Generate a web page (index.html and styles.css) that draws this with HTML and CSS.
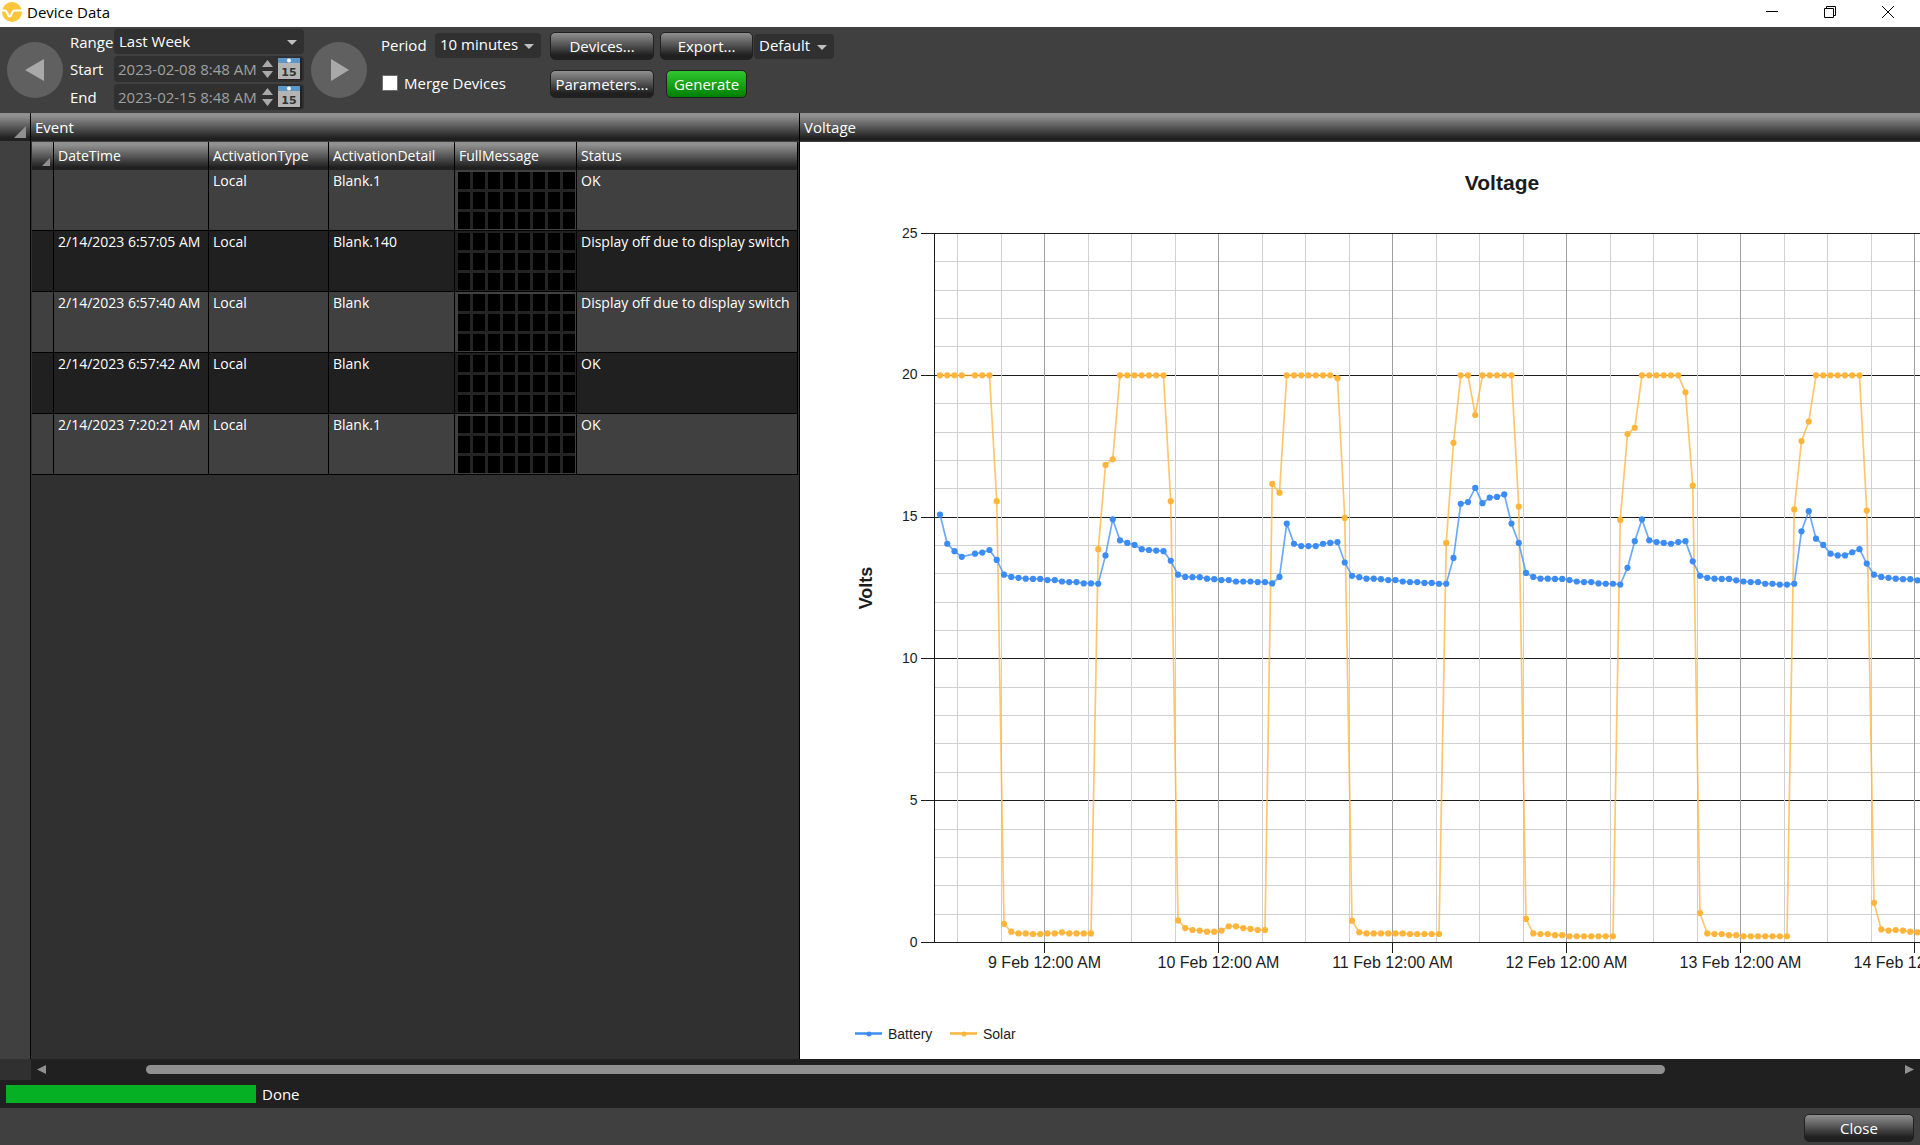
FILE: index.html
```html
<!DOCTYPE html>
<html lang="en">
<head>
  <meta charset="utf-8">
  <title>Device Data</title>
  <link rel="stylesheet" href="styles.css">
</head>
<body>

<header class="titlebar">
  <svg class="logo" viewBox="0 0 20 20" width="20" height="20">
    <circle cx="10" cy="10" r="10" fill="#fdc53a"/>
    <path d="M0 8.500 L3 8.500 C5.500 8.500 5.500 14.500 7.500 14.500 C10 14.500 9.500 8.500 12.500 8.500 L20 8.500" fill="none" stroke="#fff" stroke-width="2.2"/>
  </svg>
  <h1>Device Data</h1>
  <div class="window-buttons">
    <button aria-label="Minimize"><svg width="14" height="14" viewBox="0 0 14 14"><path d="M1 6.5H13"/></svg></button>
    <button aria-label="Restore"><svg width="14" height="14" viewBox="0 0 14 14"><path d="M1.5 3.5H10.5V12.5H1.5ZM3.5 3.5V1.5H12.5V10.5H10.5"/></svg></button>
    <button aria-label="Close window"><svg width="14" height="14" viewBox="0 0 14 14"><path d="M1 1L13 13M13 1L1 13"/></svg></button>
  </div>
</header>

<section class="toolbar">
  <button class="round" aria-label="Previous"><svg width="56" height="56"><path d="M37 17V39L18 28Z"/></svg></button>

  <div class="range">
    <label for="range">Range</label>
    <div class="select"><select id="range"><option>Last Week</option></select></div>

    <label for="start">Start</label>
    <div class="date">
      <input type="text" id="start" value="2023-02-08 8:48 AM">
      <svg class="spin" width="11" height="20"><path d="M0 8L5.500 1L11 8ZM0 12L5.500 19L11 12Z"/></svg>
      <svg class="calendar" width="24" height="22"><rect width="24" height="22" fill="#222"/><rect width="22" height="5" fill="#5b97c9"/><rect y="5" width="22" height="16" fill="#b4b4b4"/><circle cx="11" cy="2.500" r="2" fill="#fff"/><text x="11" y="18">15</text></svg>
    </div>

    <label for="end">End</label>
    <div class="date">
      <input type="text" id="end" value="2023-02-15 8:48 AM">
      <svg class="spin" width="11" height="20"><path d="M0 8L5.500 1L11 8ZM0 12L5.500 19L11 12Z"/></svg>
      <svg class="calendar" width="24" height="22"><rect width="24" height="22" fill="#222"/><rect width="22" height="5" fill="#5b97c9"/><rect y="5" width="22" height="16" fill="#b4b4b4"/><circle cx="11" cy="2.500" r="2" fill="#fff"/><text x="11" y="18">15</text></svg>
    </div>
  </div>

  <button class="round" aria-label="Next"><svg width="56" height="56"><path d="M20 17V39L38 28Z"/></svg></button>

  <div class="options">
    <div class="period">
      <label for="period">Period</label>
      <div class="select"><select id="period"><option>10 minutes</option></select></div>
    </div>
    <button class="btn wide">Devices...</button>
    <div class="export">
      <button class="btn">Export...</button>
      <div class="select"><select aria-label="Export format"><option>Default</option></select></div>
    </div>
    <div class="merge">
      <input type="checkbox" id="merge">
      <label for="merge">Merge Devices</label>
    </div>
    <button class="btn wide">Parameters...</button>
    <button class="btn generate">Generate</button>
  </div>
</section>

<main class="panes">
  <div class="gutter"><div class="bar"><svg width="12" height="12"><path d="M12 0V12H0Z"/></svg></div></div>

  <section class="event">
    <h2 class="bar">Event</h2>
    <table>
      <colgroup><col class="c-mark"><col class="c-date"><col class="c-type"><col class="c-detail"><col class="c-message"><col class="c-status"></colgroup>
      <thead>
        <tr><th class="mark"><svg width="8" height="8"><path d="M8 0V8H0Z"/></svg></th><th>DateTime</th><th>ActivationType</th><th>ActivationDetail</th><th>FullMessage</th><th>Status</th></tr>
      </thead>
      <tbody>
        <tr><td></td><td></td><td>Local</td><td>Blank.1</td><td><div class="matrix"></div></td><td>OK</td></tr>
        <tr><td></td><td>2/14/2023 6:57:05 AM</td><td>Local</td><td>Blank.140</td><td><div class="matrix"></div></td><td>Display off due to display switch</td></tr>
        <tr><td></td><td>2/14/2023 6:57:40 AM</td><td>Local</td><td>Blank</td><td><div class="matrix"></div></td><td>Display off due to display switch</td></tr>
        <tr><td></td><td>2/14/2023 6:57:42 AM</td><td>Local</td><td>Blank</td><td><div class="matrix"></div></td><td>OK</td></tr>
        <tr><td></td><td>2/14/2023 7:20:21 AM</td><td>Local</td><td>Blank.1</td><td><div class="matrix"></div></td><td>OK</td></tr>
      </tbody>
    </table>
  </section>

  <section class="voltage">
    <h2 class="bar">Voltage</h2>
    <div class="chart"><svg id="chart" width="1402" height="917"></svg></div>
  </section>
</main>

<div class="scroll">
  <div class="scroll-corner"></div>
  <button aria-label="Scroll left"><svg width="9" height="9"><path d="M9 0V9L0 4.500Z"/></svg></button>
  <div class="track"><div class="thumb"></div></div>
  <button aria-label="Scroll right"><svg width="9" height="9"><path d="M0 0V9L9 4.500Z"/></svg></button>
</div>

<div class="status">
  <div class="progress"></div>
  <span>Done</span>
</div>

<footer>
  <button class="btn close">Close</button>
</footer>

<script src="chart.js"></script>
</body>
</html>
```

FILE: styles.css
```css
* {
  box-sizing: border-box;
}

body {
  margin: 0;
  min-height: 100vh;
  display: flex;
  flex-direction: column;
  font-family: "Open Sans", "Noto Sans", sans-serif;
  font-size: 15px;
  line-height: 22px;
  color: white;
  background-color: #404040;
  overflow: hidden;
}

button, input, select {
  font: inherit;
  color: inherit;
  margin: 0;
}

button {
  padding: 0;
  border: none;
  background: none;
}

svg {
  display: block;
}

h1, h2 {
  margin: 0;
  font-size: 15px;
  font-weight: 400;
}

/* title bar */

.titlebar {
  display: flex;
  align-items: center;
  height: 27px;
  padding: 0 25px 3px 2px;
  background-color: white;
  color: black;
}

.titlebar h1 {
  margin-left: 5px;
}

.window-buttons {
  display: flex;
  gap: 44px;
  margin-left: auto;
}

.window-buttons path {
  fill: none;
  stroke: black;
}

/* toolbar */

.toolbar {
  display: flex;
  align-items: center;
  height: 86px;
  padding: 2px 7px 3px;
}

.round {
  border-radius: 50%;
  background-color: #606060;
}

.round path, .spin path {
  fill: #a9a9a9;
}

.range {
  display: grid;
  grid-template-columns: 44px 190px;
  grid-template-rows: 25px 26px 26px;
  row-gap: 2px;
  align-items: center;
  margin: 0 7px;
}

.select, .date {
  position: relative;
  height: 100%;
  border-radius: 4px;
  background-color: #303030;
}

.select::after {
  content: "";
  position: absolute;
  right: 7px;
  top: 11px;
  border: 5px solid transparent;
  border-top-color: #c0c0c0;
  border-bottom: 0;
  pointer-events: none;
}

.select select {
  appearance: none;
  width: 100%;
  height: 100%;
  padding: 0 5px 2px;
  border: none;
  background: none;
}

.date {
  display: flex;
  align-items: center;
  padding-right: 2px;
}

.date input {
  flex: 1;
  min-width: 0;
  padding: 0 0 0 4px;
  border: none;
  background: none;
  color: #a0a0a0;
}

.calendar {
  margin-left: 5px;
}

.calendar text {
  font: bold 11px "DejaVu Sans", sans-serif;
  text-anchor: middle;
  fill: #333;
}

.options {
  display: grid;
  grid-template-columns: 169px 110px auto;
  grid-template-rows: 28px 28px;
  row-gap: 10px;
  margin-left: 14px;
  padding-bottom: 9px;
}

.period, .export, .merge {
  display: flex;
  align-items: center;
}

.period .select {
  width: 106px;
  height: 25px;
  margin-left: auto;
  margin-right: 9px;
}

.export .select {
  width: 80px;
  height: 25px;
  margin-left: 1px;
}

.export .btn {
  width: 93px;
}

.period, .merge {
  padding-bottom: 2px;
}

.merge input {
  appearance: none;
  width: 16px;
  height: 16px;
  margin: 0 6px 0 1px;
  border: 1px solid #707070;
  background-color: white;
}

.btn {
  height: 28px;
  border: 1px solid #202020;
  border-radius: 5px;
  background-image: linear-gradient(#909090, #202020 85%);
}

.wide {
  width: 104px;
}

.generate {
  width: 81px;
  margin-left: 6px;
  background-image: linear-gradient(#30c830, #008000);
}

/* panes */

.panes {
  flex: 1;
  display: flex;
  min-height: 0;
}

.bar {
  height: 29px;
  padding: 3px 4px;
  border-bottom: 1px solid #404040;
  background-image: linear-gradient(#909090 10%, #202020 90%);
}

.gutter {
  width: 31px;
  border-right: 1px solid black;
}

.gutter .bar {
  display: flex;
  justify-content: flex-end;
  align-items: flex-end;
}

.gutter path, .mark path, .scroll path {
  fill: #909090;
}

.event {
  width: 769px;
  border-right: 1px solid black;
  background-color: #303030;
}

.voltage {
  flex: 1;
  min-width: 0;
  background-color: white;
}

.chart {
  margin-left: 1px;
  overflow: hidden;
}

table {
  width: 766px;
  margin-left: 1px;
  table-layout: fixed;
  border-spacing: 0;
  font-size: 14px;
}

.c-mark { width: 22px; }
.c-date { width: 155px; }
.c-type { width: 120px; }
.c-detail { width: 126px; }
.c-message { width: 122px; }
.c-status { width: 221px; }

th {
  height: 28px;
  padding: 0 4px;
  border-right: 1px solid black;
  background-image: linear-gradient(#909090 10%, #202020 90%);
  font-weight: 400;
  text-align: left;
  white-space: nowrap;
}

th.mark {
  padding: 12px 3px 0 10px;
}

td {
  height: 61px;
  padding: 0 4px;
  border-right: 1px solid black;
  border-bottom: 1px solid black;
  background-color: #404040;
  vertical-align: top;
  white-space: nowrap;
}

tr:nth-child(even) td {
  background-color: #202020;
}

/* 8 x 3 dot matrix sign */
.matrix {
  width: 117px;
  height: 57px;
  margin: 2px 0 0 -1px;
  background:
    repeating-linear-gradient(90deg, transparent 0 12px, #242424 12px 15px),
    repeating-linear-gradient(transparent 0 17px, #242424 17px 20px),
    black;
}

/* chart */

#chart {
  font-family: "Liberation Sans", Arial, sans-serif;
  font-size: 16px;
  fill: #1c1c1c;
}

#chart .grid {
  shape-rendering: crispEdges;
}

#chart .title {
  font-size: 21px;
  font-weight: bold;
}

#chart .axis-title {
  font-size: 18px;
  font-weight: bold;
}

#chart .y-label,
#chart .legend {
  font-size: 14px;
}

/* bottom */

.scroll {
  display: flex;
  align-items: center;
  height: 21px;
  padding-right: 6px;
  background-color: #202020;
}

.scroll-corner {
  width: 31px;
  height: 21px;
  margin-right: 6px;
  background-color: #303030;
}

.track {
  flex: 1;
}

.thumb {
  width: 81.7%;
  height: 9px;
  margin-left: 5.4%;
  border-radius: 5px;
  background-color: #909090;
}

.status {
  display: flex;
  align-items: center;
  height: 28px;
  padding: 0 6px;
  background-color: #202020;
}

.progress {
  width: 250px;
  height: 18px;
  margin-right: 6px;
  background-color: #06b025;
}

footer {
  display: flex;
  justify-content: flex-end;
  height: 37px;
  padding: 6px 6px 3px;
}

.close {
  width: 110px;
}
```

FILE: chart.js
```javascript
const svg = document.getElementById('chart');
const NS = 'http://www.w3.org/2000/svg';

const left = 133.5;
const bottom = 800.5;
const top0 = 91.5;
const width = 1402;
const hour = 7.25;
const volt = (bottom - top0) / 25;
const firstDay = 243.7;
const day = 174;

// hourly readings, one is missing after the first four
const battery = [
  15.09, 14.06, 13.80, 13.60,
  13.71, 13.75, 13.84, 13.49, 12.97, 12.89, 12.86, 12.83, 12.82, 12.82, 12.78, 12.78, 12.73, 12.71, 12.71, 12.66, 12.66,
  12.65, 13.65, 14.92, 14.18, 14.09, 14.02, 13.87, 13.84, 13.82, 13.80, 13.46, 12.97, 12.89, 12.88, 12.88, 12.83, 12.81, 12.78, 12.78, 12.73, 12.73, 12.73, 12.71, 12.71,
  12.66, 12.89, 14.77, 14.06, 13.98, 13.98, 13.98, 14.06, 14.09, 14.12, 13.40, 12.93, 12.88, 12.83, 12.83, 12.81, 12.78, 12.78, 12.73, 12.71, 12.71, 12.68, 12.68, 12.65,
  12.65, 13.56, 15.47, 15.53, 16.03, 15.49, 15.69, 15.71, 15.80, 14.77, 14.09, 13.03, 12.89, 12.83, 12.83, 12.82, 12.82, 12.78, 12.73, 12.71, 12.71, 12.66, 12.65, 12.65,
  12.62, 13.21, 14.15, 14.92, 14.18, 14.12, 14.09, 14.06, 14.12, 14.15, 13.44, 12.93, 12.86, 12.83, 12.82, 12.82, 12.77, 12.73, 12.71, 12.71, 12.65, 12.65, 12.62, 12.62,
  12.65, 14.50, 15.21, 14.24, 14.02, 13.71, 13.65, 13.65, 13.76, 13.87, 13.36, 12.97, 12.89, 12.86, 12.83, 12.81, 12.81, 12.77, 12.75
];

const solar = [
  20, 20, 20, 20,
  20, 20, 20, 15.56, 0.66, 0.38, 0.32, 0.32, 0.30, 0.30, 0.32, 0.32, 0.36, 0.32, 0.32, 0.32, 0.32,
  13.87, 16.84, 17.04, 20, 20, 20, 20, 20, 20, 20, 15.56, 0.78, 0.51, 0.44, 0.42, 0.38, 0.38, 0.42, 0.57, 0.57, 0.51, 0.48, 0.44, 0.44,
  16.17, 15.86, 20, 20, 20, 20, 20, 20, 20, 19.90, 14.97, 0.77, 0.36, 0.32, 0.32, 0.32, 0.32, 0.32, 0.32, 0.30, 0.30, 0.30, 0.30, 0.30,
  14.09, 17.62, 20, 20, 18.60, 20, 20, 20, 20, 20, 15.37, 0.83, 0.32, 0.30, 0.30, 0.26, 0.26, 0.22, 0.22, 0.22, 0.22, 0.22, 0.22, 0.22,
  14.90, 17.93, 18.15, 20, 20, 20, 20, 20, 20, 19.40, 16.11, 1.04, 0.32, 0.30, 0.30, 0.26, 0.26, 0.22, 0.22, 0.22, 0.22, 0.22, 0.22, 0.22,
  15.27, 17.68, 18.37, 20, 20, 20, 20, 20, 20, 20, 15.23, 1.40, 0.46, 0.42, 0.44, 0.42, 0.38, 0.36, 0.34
];

const add = (name, attrs, text) => {
  const el = document.createElementNS(NS, name);
  for (const key in attrs) el.setAttribute(key, attrs[key]);
  if (text !== undefined) el.textContent = text;
  svg.appendChild(el);
};

const line = (x1, y1, x2, y2, stroke) =>
  add('line', {x1, y1, x2, y2, stroke, class: 'grid'});

// centre of the pixel, so the grid stays sharp
const snap = n => Math.floor(n) + 0.5;
const y = v => bottom - v * volt;
const x = i => i < 4 ? 139 + i * hour : 174 + (i - 4) * hour;

// grid
for (let v = 0; v <= 25; v++) {
  if (v % 5) line(left, snap(y(v)), width, snap(y(v)), '#d0d0d0');
}
for (let v = 0; v <= 25; v += 5) {
  line(left - 14, snap(y(v)), width, snap(y(v)), '#1c1c1c');
  add('text', {x: left - 17, y: y(v) + 4, 'text-anchor': 'end', class: 'y-label'}, v);
}
for (let q = -2; firstDay + q * day / 4 < width; q++) {
  const gx = snap(firstDay + q * day / 4);
  line(gx, top0, gx, bottom, q % 4 ? '#d0d0d0' : '#a0a0a0');
  if (q % 4 === 0) {
    line(gx, bottom, gx, bottom + 10, '#1c1c1c');
    add('text', {x: gx, y: bottom + 25, 'text-anchor': 'middle'}, `${9 + q / 4} Feb 12:00 AM`);
  }
}
line(left, top0, left, bottom, '#1c1c1c');
line(left, bottom, width, bottom, '#1c1c1c');

const series = (data, color) => {
  const points = data.map((v, i) => `${x(i)},${y(v)}`).join(' ');
  add('polyline', {points, fill: 'none', stroke: color, 'stroke-width': 1.7, 'stroke-opacity': 0.75});
  data.forEach((v, i) => add('circle', {cx: x(i), cy: y(v), r: 3.1, fill: color}));
};
series(solar, '#ffb43c');
series(battery, '#3c8cf5');

// titles and legend
add('text', {x: width / 2, y: 48, 'text-anchor': 'middle', class: 'title'}, 'Voltage');
add('text', {transform: 'translate(71 446) rotate(-90)', 'text-anchor': 'middle', class: 'axis-title'}, 'Volts');

const legend = (lx, name, color) => {
  add('line', {x1: lx, y1: 891.5, x2: lx + 27, y2: 891.5, stroke: color, 'stroke-width': 2.5});
  add('circle', {cx: lx + 14, cy: 892, r: 2.5, fill: color});
  add('text', {x: lx + 33, y: 897, class: 'legend'}, name);
};
legend(54, 'Battery', '#3c8cf5');
legend(149, 'Solar', '#ffb43c');
```
